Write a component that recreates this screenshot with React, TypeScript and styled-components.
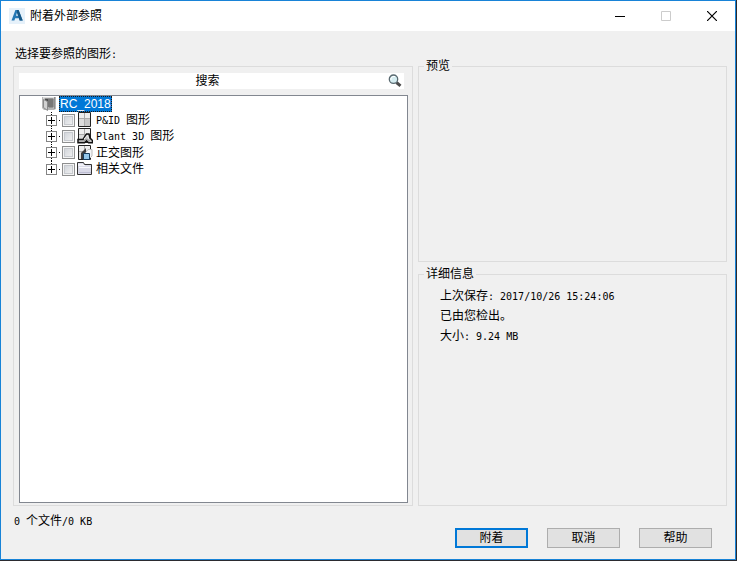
import React from "react";
import styled, { createGlobalStyle } from "styled-components";

const Global = createGlobalStyle`
  *, *::before, *::after { box-sizing: border-box; }
  body {
    margin: 0;
    background: #2b2b30;
    color: #000;
    font: 12px/16px "Noto Sans CJK SC", sans-serif;
  }
`;

const Desktop = styled.div`
  display: flex;
  min-height: 100vh;
  padding: 0 1px 1px 0;
  background: #2b2b30;
`;

const Dialog = styled.main`
  flex: 1;
  display: flex;
  flex-direction: column;
  min-width: 0;
  border: 1px solid #1883d7;
  background: #f0f0f0;
`;

const TitleBar = styled.header`
  display: flex;
  align-items: center;
  height: 30px;
  padding-left: 8px;
  background: #fff;
`;

const Title = styled.h1`
  flex: 1;
  margin: 0 0 0 5px;
  padding-bottom: 2px;
  font-size: 12px;
  font-weight: 400;
`;

const CaptionButton = styled.button`
  display: grid;
  place-items: center;
  width: 46px;
  height: 30px;
  padding: 0;
  border: 0;
  background: transparent;
  color: #000;

  &:disabled { color: #ccc; }
`;

const Content = styled.div`
  flex: 1;
  display: flex;
  flex-direction: column;
  padding: 14px 8px 11px 12px;
`;

const Prompt = styled.h2`
  margin: 0 0 5px 2px;
  font-size: 12px;
  font-weight: 400;
`;

const Panels = styled.div`
  flex: 1;
  display: grid;
  grid-template-columns: minmax(0, 400fr) minmax(0, 309fr);
  gap: 5px;
`;

const FilePanel = styled.section`
  display: flex;
  flex-direction: column;
  gap: 6px;
  padding: 6px 4px 2px 5px;
  border: 1px solid #dcdcdc;
`;

const SearchBar = styled.label`
  display: flex;
  align-items: center;
  height: 16px;
  margin-right: 4px;
  padding-right: 2px;
  background: #fff;
`;

const SearchInput = styled.input`
  flex: 1;
  min-width: 0;
  height: 16px;
  padding: 0 0 2px 8px;
  border: 0;
  outline: 0;
  background: transparent;
  font: inherit;
  text-align: center;

  &::placeholder { color: #000; opacity: 1; }
`;

const Tree = styled.ul`
  flex: 1;
  margin: 0;
  padding: 0 0 0 22px;
  list-style: none;
  border: 1px solid #828790;
  background: #fff;
`;

const Branches = styled.ul`
  margin: 0;
  padding: 0 0 0 4px;
  list-style: none;
`;

const Row = styled.div`
  display: flex;
  align-items: center;
  height: 16px;
`;

const RootName = styled.span`
  margin-left: 3px;
  padding: 0 1px;
  outline: 1px dotted #1a1a1a;
  outline-offset: -1px;
  background: #0078d7;
  color: #fff;
  font: 12px/16px "Liberation Sans", sans-serif;
`;

const Branch = styled.li`
  display: flex;
  align-items: center;
  height: 16px;
  background: repeating-linear-gradient(#000 0 1px, #fff 1px 2px) 5px 0 / 1px 100% no-repeat;

  &:last-child { background-size: 1px 50%; }
  &:nth-child(3) { height: 17px; }
`;

const Expander = styled.button`
  display: grid;
  width: 11px;
  height: 11px;
  padding: 0;
  border: 1px solid #848484;
  place-items: center;
  background: #fff;
`;

const Dots = styled.span`
  width: 5px;
  height: 1px;
  background: linear-gradient(#000, #000) 2px 0 / 1px 1px no-repeat;
`;

const Entry = styled.label`
  display: flex;
  align-items: center;
`;

const Check = styled.input`
  appearance: none;
  width: 13px;
  height: 13px;
  margin: 0 2px 0 0;
  border: 1px solid #8e8f8f;
  background: linear-gradient(135deg, #cbcfd5, #f6f6f6);
  box-shadow: inset 0 0 0 1px #f4f4f4, inset 0 0 0 2px #c6c9ce;

  &:checked { background: #0078d7; }
`;

const EntryName = styled.span`
  margin-left: 3px;
  padding-bottom: 2px;
  line-height: 14px;
`;

/* Half-width characters take half the width of a full-width one. */
const Half = styled.span`
  font: 10px/10px "DejaVu Sans Mono", monospace;
  white-space: pre;
`;

const InfoPanels = styled.div`
  display: grid;
  grid-template-rows: minmax(0, 204fr) minmax(0, 239fr);
  gap: 4px;
  margin-top: -8px;
`;

const Group = styled.fieldset`
  min-width: 0;
  margin: 0;
  padding: 5px 21px;
  border: 1px solid #dcdcdc;
`;

const GroupName = styled.legend`
  margin-left: -16px;
  padding: 0 2px 2px;
  line-height: 14px;
`;

const Detail = styled.p`
  margin: 0 0 4px;
`;

const Status = styled.p`
  margin: 6px 0 0 1px;
`;

const Actions = styled.footer`
  display: flex;
  justify-content: flex-end;
  gap: 19px;
  padding-right: 15px;
`;

const ActionButton = styled.button<{ $main?: boolean }>`
  width: 73px;
  height: 20px;
  padding: 0 0 2px;
  border: ${(p) => (p.$main ? "2px solid #0078d7" : "1px solid #adadad")};
  background: #e1e1e1;
  color: #000;
  font: inherit;
  line-height: 14px;
`;

const AppIcon = () => (
  <svg width="16" height="16" viewBox="0 0 16 16" aria-hidden="true">
    <rect width="16" height="16" fill="#e6f1fa" />
    <path d="M2.5 12.5 6.4 2h3.2l4.1 10.5h-3l-.8-2.2H6.2l-.8 2.2zM7 7.8h2.2L8 4.5z" fill="#2478b5" fillRule="evenodd" />
    <path d="M8 2h1.6l4.1 10.5h-3L8 4.5z" fill="#175785" />
  </svg>
);

const Magnifier = () => (
  <svg width="14" height="14" viewBox="0 0 14 14" aria-hidden="true">
    <path d="m8.5 8.5 4 3.3" stroke="#4c4c4c" strokeWidth="3" />
    <circle cx="5.5" cy="5.2" r="4.2" fill="#d5edf1" stroke="#596970" strokeWidth="1.3" />
    <path d="M3 6V4l2-1.5h2" stroke="#fff" fill="none" />
  </svg>
);

const ProjectIcon = () => (
  <svg width="14" height="16" viewBox="0 0 14 16" aria-hidden="true">
    <path d="M0 1h14v12l-2 1H2l-2-2z" fill="#b4b4b4" />
    <path d="M1 1h12v11H2z" fill="#dedede" />
    <path d="M2.5 2.5h9v9h-5z" fill="#4c4c4c" />
    <path d="M6 3h5v8H6z" fill="#777" />
    <path d="m1.5 3.5 4 2v9l-4-3z" fill="#d2d2d2" stroke="#8b8b8b" />
    <path d="M12.5 1v12" stroke="#8d8d8d" />
  </svg>
);

const Sheet = () => (
  <>
    <path d="M1.5.5h12v14h-12z" fill="#dcdcdc" stroke="#222" />
    <path d="M7.5 1v13M2 6.5h11" stroke="#aaa" />
    <path d="M8 7h5v7H8z" fill="#c8c8c8" />
    <path d="M2 1h5v5H2zM8 1h5v5H8z" fill="#ededed" />
  </>
);

type Kind = "pid" | "plant" | "ortho" | "folder";

const EntryIcon = ({ kind }: { kind: Kind }) => (
  <svg width="16" height="16" viewBox="0 0 16 16" aria-hidden="true">
    {kind === "folder" ? (
      <>
        <path d="M.5 13.5v-12h6l1 2h7v10z" fill="#dadae8" stroke="#333" />
        <path d="M1 4.5h6M7.5 4v1M2 6.5h12" stroke="#f8f8fc" />
        <path d="M1 3h5v2H1z" fill="#f1f1f7" />
        <path d="M2 11.5h12" stroke="#bdbdd2" />
      </>
    ) : (
      <Sheet />
    )}
    {kind === "plant" && (
      <>
        <path d="M1 14.8v-3.3h5l3.5-5.5h2.5l1 4 2.5 2.5v2.3h-4l-2-2-2 2z" fill="#c9c9c9" stroke="#111" strokeWidth="1.5" />
        <path d="m7 11 3.5-4 1 4" fill="none" stroke="#eee" />
        <path d="M2 13h5l2-2 4 2" fill="none" stroke="#999" />
      </>
    )}
    {kind === "ortho" && (
      <>
        <path d="m8 8 3-3.5h4V11l-3 3" fill="#f4f6f8" stroke="#bbb" />
        <path d="M4 11V8l2-2 3-3v4l-3 3v4H4z" fill="#3e3e3e" />
        <path d="M6.5 8.5h6v6h-6z" fill="#94c8eb" stroke="#163d5e" />
      </>
    )}
  </svg>
);

const entries: { id: string; kind: Kind; latin?: string; name: string }[] = [
  { id: "pid", kind: "pid", latin: "P&ID ", name: "图形" },
  { id: "plant", kind: "plant", latin: "Plant 3D ", name: "图形" },
  { id: "ortho", kind: "ortho", name: "正交图形" },
  { id: "related", kind: "folder", name: "相关文件" },
];

export default function App() {
  return (
    <Desktop>
      <Global />
      <Dialog>
        <TitleBar>
          <AppIcon />
          <Title>附着外部参照</Title>
          <CaptionButton aria-label="最小化">
            <svg width="10" height="10"><path d="M0 5.5h10" stroke="currentColor" /></svg>
          </CaptionButton>
          <CaptionButton aria-label="最大化" disabled>
            <svg width="10" height="10"><path d="M.5.5h9v9h-9z" fill="none" stroke="currentColor" /></svg>
          </CaptionButton>
          <CaptionButton aria-label="关闭">
            <svg width="10" height="10"><path d="m0 0 10 10M10 0 0 10" stroke="currentColor" strokeWidth="1.2" /></svg>
          </CaptionButton>
        </TitleBar>
        <Content>
          <Prompt>选择要参照的图形<Half>:</Half></Prompt>
          <Panels>
            <FilePanel>
              <SearchBar>
                <SearchInput type="text" placeholder="搜索" aria-label="搜索" />
                <Magnifier />
              </SearchBar>
              <Tree>
                <li>
                  <Row>
                    <ProjectIcon />
                    <RootName>RC_2018</RootName>
                  </Row>
                  <Branches>
                    {entries.map((e) => (
                      <Branch key={e.id}>
                        <Expander aria-label={`展开${e.name}`}>
                          <svg width="9" height="9"><path d="M1 4.5h7M4.5 1v7" stroke="#000" /></svg>
                        </Expander>
                        <Dots />
                        <Entry>
                          <Check type="checkbox" />
                          <EntryIcon kind={e.kind} />
                          <EntryName>
                            {e.latin && <Half>{e.latin}</Half>}
                            {e.name}
                          </EntryName>
                        </Entry>
                      </Branch>
                    ))}
                  </Branches>
                </li>
              </Tree>
            </FilePanel>
            <InfoPanels>
              <Group>
                <GroupName>预览</GroupName>
              </Group>
              <Group>
                <GroupName>详细信息</GroupName>
                <Detail>上次保存<Half>{": 2017/10/26 15:24:06"}</Half></Detail>
                <Detail>已由您检出。</Detail>
                <Detail>大小<Half>{": 9.24 MB"}</Half></Detail>
              </Group>
            </InfoPanels>
          </Panels>
          <Status><Half>{"0 "}</Half>个文件<Half>{"/0 KB"}</Half></Status>
          <Actions>
            <ActionButton $main>附着</ActionButton>
            <ActionButton>取消</ActionButton>
            <ActionButton>帮助</ActionButton>
          </Actions>
        </Content>
      </Dialog>
    </Desktop>
  );
}
